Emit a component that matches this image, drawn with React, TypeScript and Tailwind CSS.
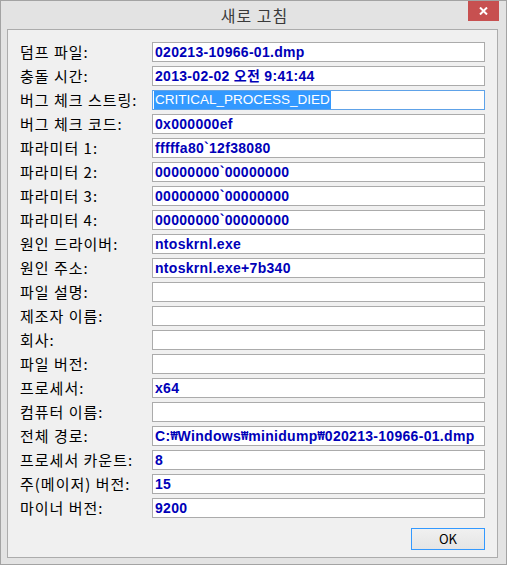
import React from "react";

const rows: { label: string; value: string; selected?: boolean }[] = [
  { label: "덤프 파일:", value: "020213-10966-01.dmp" },
  { label: "충돌 시간:", value: "2013-02-02 오전 9:41:44" },
  { label: "버그 체크 스트링:", value: "CRITICAL_PROCESS_DIED", selected: true },
  { label: "버그 체크 코드:", value: "0x000000ef" },
  { label: "파라미터 1:", value: "fffffa80`12f38080" },
  { label: "파라미터 2:", value: "00000000`00000000" },
  { label: "파라미터 3:", value: "00000000`00000000" },
  { label: "파라미터 4:", value: "00000000`00000000" },
  { label: "원인 드라이버:", value: "ntoskrnl.exe" },
  { label: "원인 주소:", value: "ntoskrnl.exe+7b340" },
  { label: "파일 설명:", value: "" },
  { label: "제조자 이름:", value: "" },
  { label: "회사:", value: "" },
  { label: "파일 버전:", value: "" },
  { label: "프로세서:", value: "x64" },
  { label: "컴퓨터 이름:", value: "" },
  { label: "전체 경로:", value: "C:₩Windows₩minidump₩020213-10966-01.dmp" },
  { label: "프로세서 카운트:", value: "8" },
  { label: "주(메이저) 버전:", value: "15" },
  { label: "마이너 버전:", value: "9200" },
];

const korean = "font-['Noto_Sans_CJK_KR','Noto_Sans',sans-serif]";
const latin = "font-['Liberation_Sans','Noto_Sans_CJK_KR',sans-serif]";

// the won sign is the path separator on Korean Windows; keep it narrow
function Value({ text }: { text: string }) {
  const parts = text.split("₩");
  return (
    <>
      {parts.map((p, i) => (
        <React.Fragment key={i}>
          {i > 0 && (
            <span className="font-['DejaVu_Sans_Mono',monospace] text-[12px] tracking-normal">₩</span>
          )}
          {p}
        </React.Fragment>
      ))}
    </>
  );
}

function Field({ value, selected }: { value: string; selected?: boolean }) {
  if (selected) {
    return (
      <div className="flex h-[20px] items-center border border-[#5ea2e8] bg-white pl-[1px]">
        <span className={`${latin} bg-[#3399ff] px-[1px] text-[13.5px] leading-[18px] text-white`}>
          {value}
        </span>
      </div>
    );
  }
  return (
    <div
      className={`${latin} flex h-[20px] items-center overflow-hidden border border-[#ababab] bg-white px-[2px] text-[14px] font-bold tracking-[0.3px] whitespace-pre text-[#0000b8]`}
    >
      <Value text={value} />
    </div>
  );
}

export default function App() {
  return (
    <div className="flex h-[565px] w-[507px] flex-col border border-[#a3a3a3] bg-[#e3e3e3]">
      {/* title bar */}
      <div className="relative flex h-[28px] shrink-0 items-center justify-center">
        <span className={`${korean} -mt-[1px] pl-[2px] text-[16px] tracking-[1px] text-[#3a3a3a]`}>
          새로 고침
        </span>
        <div className="absolute top-0 right-[7px] flex h-[20px] w-[31px] items-center justify-center bg-[#c75050]">
          <svg width="9" height="8" viewBox="0 0 9 8">
            <path d="M1 0.5 L8 7.5 M8 0.5 L1 7.5" stroke="white" strokeWidth="2" />
          </svg>
        </div>
      </div>

      {/* client area */}
      <div className="mr-[8px] mb-[6px] ml-[6px] flex flex-1 flex-col border border-[#acacac] bg-[#f0f0f0] pt-[12px] pr-[12px] pl-[12px]">
        <div className="flex flex-col gap-[4px]">
          {rows.map((r, i) => (
            <div key={i} className="flex items-center">
              <div
                className={`${korean} w-[132px] shrink-0 text-[15px] leading-[20px] tracking-[1px] whitespace-nowrap text-black`}
              >
                {r.label}
              </div>
              <div className="min-w-0 flex-1">
                <Field value={r.value} selected={r.selected} />
              </div>
            </div>
          ))}
        </div>

        <div className="mt-[10px] flex justify-end">
          <button
            className={`${korean} flex h-[22px] w-[74px] items-center justify-center border border-[#3399ff] bg-gradient-to-b from-[#f0f0f0] to-[#e5e5e5] text-[13px] text-black`}
          >
            OK
          </button>
        </div>
      </div>
    </div>
  );
}
